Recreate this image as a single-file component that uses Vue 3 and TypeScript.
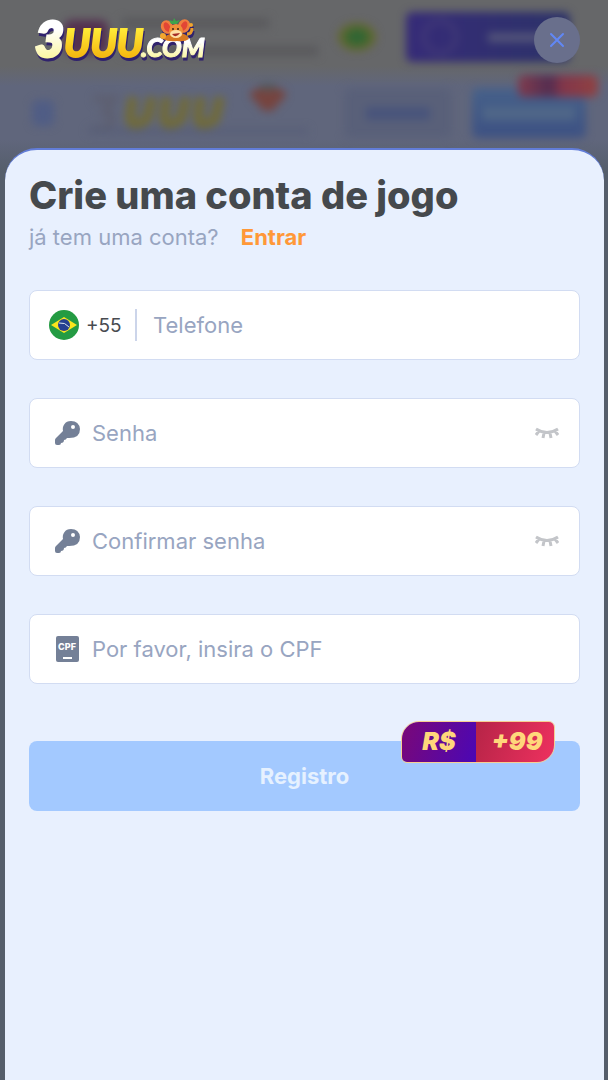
<script setup lang="ts">
import { ref } from 'vue'

interface SecretField {
  id: string
  label: string
}

const secretFields: SecretField[] = [
  { id: 'password', label: 'Senha' },
  { id: 'confirm', label: 'Confirmar senha' },
]

const phone = ref('')
const cpf = ref('')
const secrets = ref<Record<string, string>>({ password: '', confirm: '' })
const visible = ref<Record<string, boolean>>({ password: false, confirm: false })

function toggle(id: string) {
  visible.value[id] = !visible.value[id]
}
</script>

<template>
  <div class="page">
    <div class="backdrop" aria-hidden="true">
      <div class="promo">
        <i class="promo-mark"></i>
        <div class="promo-lines"><i></i><i></i></div>
        <i class="promo-flag"></i>
        <div class="promo-button"><i class="ring"></i><i class="dash"></i></div>
      </div>
      <div class="site-bar">
        <i class="menu"></i>
        <svg class="site-logo" width="220" height="56" viewBox="0 0 220 56">
          <path d="M6 14h20l-9 13q13 3 3 14-6 6-16 2" fill="none" stroke="#5d5f70" stroke-width="7" />
          <path d="M45 12l-3 20q1 14 17 2l5-22M79 12l-3 20q1 14 17 2l5-22M113 12l-3 20q1 14 17 2l5-22" fill="none" stroke="#716b38" stroke-width="10" />
          <path d="M0 46h220" stroke="#575e78" stroke-width="5" />
          <path d="M162 8q8-8 18-2 10-6 18 2-2 8-8 10-2 8-10 8t-10-8q-6-2-8-10z" fill="#76443f" />
          <path d="M172 3q8-3 16 0" stroke="#4b5248" stroke-width="4" />
        </svg>
        <div class="ghost login"><i></i></div>
        <div class="ghost join"><i></i><b></b></div>
      </div>
    </div>

    <header class="top">
      <svg class="logo" width="180" height="52" viewBox="0 0 180 52" role="img" aria-label="3UUU.COM">
        <defs>
          <linearGradient id="pale" x1="0" y1="0" x2="0" y2="1">
            <stop offset="0.35" stop-color="#ffffff" />
            <stop offset="0.85" stop-color="#fbf6a0" />
          </linearGradient>
          <linearGradient id="gold" x1="0" y1="0" x2="0" y2="1">
            <stop offset="0.25" stop-color="#ffe835" />
            <stop offset="0.8" stop-color="#f5b912" />
          </linearGradient>
        </defs>
        <g class="logo-text">
          <text x="4" y="43" font-size="50" fill="url(#pale)" stroke="url(#pale)" stroke-width="3">3</text>
          <text x="33" y="43" font-size="38" fill="url(#gold)" stroke="url(#gold)" stroke-width="2">UUU</text>
          <text x="110" y="43" font-size="26" fill="url(#pale)" stroke="url(#pale)" stroke-width="1">.COM</text>
        </g>
        <g>
          <path d="M132 25q4-6 13-5 10-2 13 5-4 3-12 2-9 1-14-2z" fill="#d87820" />
          <ellipse cx="136" cy="13" rx="6" ry="7" fill="#ef7f3f" transform="rotate(-25 136 13)" />
          <ellipse cx="136" cy="13" rx="3" ry="5" fill="#e24635" transform="rotate(-25 136 13)" />
          <ellipse cx="153" cy="12" rx="6" ry="7" fill="#ef7f3f" transform="rotate(25 153 12)" />
          <ellipse cx="153" cy="12" rx="3" ry="5" fill="#e24635" transform="rotate(25 153 12)" />
          <path d="M156 20q5 0 5-6" fill="none" stroke="#e99a2b" stroke-width="3" />
          <circle cx="160" cy="11" r="2" fill="#f3a62e" />
          <circle cx="132" cy="22" r="3" fill="#f3a62e" />
          <ellipse cx="145" cy="17" rx="7" ry="7" fill="#ee9139" />
          <ellipse cx="145" cy="20" rx="6" ry="4" fill="#ffe0a6" />
          <path d="M141 20q4 5 8-1z" fill="#a52d28" />
          <circle cx="142" cy="15" r="1" fill="#382217" />
          <circle cx="147" cy="15" r="1" fill="#382217" />
          <path d="M140 10l-2-4 4 1 1-3 2 3 4-1-3 4z" fill="#3da34c" />
        </g>
      </svg>
      <button class="close" type="button" aria-label="Fechar">
        <svg width="16" height="16" viewBox="0 0 16 16"><path d="M2 2l12 12M14 2L2 14" /></svg>
      </button>
    </header>

    <main class="sheet">
      <h1>Crie uma conta de jogo</h1>
      <p class="sub">já tem uma conta? <a href="#entrar">Entrar</a></p>

      <form @submit.prevent>
        <div class="field phone">
          <svg class="flag" width="30" height="30" viewBox="0 0 30 30" aria-hidden="true">
            <circle cx="15" cy="15" r="15" fill="#249b43" />
            <path d="M2 15L15 7l13 8-13 8z" fill="#fbe51d" />
            <circle cx="15" cy="15" r="6" fill="#253f91" />
            <path d="M10 13q6-1 10 4" fill="none" stroke="#dbe8ee" stroke-width="1" />
          </svg>
          <span class="code">+55</span>
          <span class="divider"></span>
          <input v-model="phone" type="tel" aria-label="Telefone" placeholder="Telefone" />
        </div>

        <div v-for="field in secretFields" :key="field.id" class="field">
          <svg class="icon" width="26" height="26" viewBox="0 0 26 26" aria-hidden="true">
            <path fill-rule="evenodd" d="M16 1C10 1 7 6 8 11L1 18Q0 19 0 20V23Q0 25 2 25H4Q6 25 6 23Q9 23 9 20Q11 20 12 18Q25 19 25 9Q24 1 16 1zM18 5a2 2 0 1 1 0 4 2 2 0 0 1 0-4z" fill="#748097" />
          </svg>
          <input
            v-model="secrets[field.id]"
            :type="visible[field.id] ? 'text' : 'password'"
            :aria-label="field.label"
            :placeholder="field.label"
          />
          <button class="eye" type="button" aria-label="Mostrar senha" @click="toggle(field.id)">
            <svg width="24" height="14" viewBox="0 0 24 14">
              <path d="M1 3q11 7 22 0M4 5L1 9M9 7L8 12M15 7l1 5M20 5l3 4" />
            </svg>
          </button>
        </div>

        <div class="field">
          <svg class="icon" width="26" height="28" viewBox="0 0 26 28" aria-hidden="true">
            <rect x="1" y="1" width="23" height="26" rx="2" fill="#748097" />
            <text x="12" y="15" text-anchor="middle" class="cpf">CPF</text>
            <path d="M8 23h9" stroke="#fff" stroke-width="2" />
          </svg>
          <input v-model="cpf" type="text" inputmode="numeric" aria-label="CPF" placeholder="Por favor, insira o CPF" />
        </div>

        <div class="action">
          <button class="submit" type="submit">Registro</button>
          <div class="bonus"><span>R$</span><span>+99</span></div>
        </div>
      </form>
    </main>
  </div>
</template>

<style>
body {
  margin: 0;
}
</style>

<style scoped>
* {
  box-sizing: border-box;
}

.page {
  position: relative;
  display: flex;
  flex-direction: column;
  min-height: 100vh;
  overflow: hidden;
  background: #555e6b;
  font-family: Inter, "Liberation Sans", sans-serif;
}

.backdrop {
  position: absolute;
  inset: 0 0 auto;
  padding-bottom: 20px;
  background: linear-gradient(#666769 66px, #60667c 86px 140px, #555e6b);
}

.promo,
.site-bar {
  display: flex;
  align-items: center;
  filter: blur(4px);
}

.promo {
  height: 74px;
  padding: 0 38px 0 64px;
}

.promo-mark {
  width: 44px;
  height: 34px;
  border-radius: 8px;
  background: #54304f;
}

.promo-lines {
  display: grid;
  flex: 1;
  gap: 18px;
  margin: 0 20px 0 14px;
}

.promo-lines i {
  width: 75%;
  height: 10px;
  background: #5a5a5d;
}

.promo-lines i + i {
  width: 100%;
}

.promo-flag {
  width: 38px;
  height: 28px;
  margin-right: 30px;
  border-radius: 50%;
  background: radial-gradient(ellipse, #2e6634 25%, #69682d 65%);
}

.promo-button {
  display: flex;
  align-items: center;
  gap: 30px;
  width: 164px;
  height: 50px;
  padding-left: 16px;
  border-radius: 6px;
  background: linear-gradient(90deg, #362b78, #2c3269);
}

.ring {
  width: 36px;
  height: 36px;
  border: 4px solid #433b78;
  border-radius: 50%;
}

.dash {
  width: 60px;
  height: 9px;
  background: #54557a;
}

.site-bar {
  height: 78px;
  padding: 0 22px 0 32px;
}

.menu {
  width: 22px;
  height: 26px;
  border-radius: 6px;
  background: #505d85;
}

.site-logo {
  margin-left: 34px;
}

.ghost {
  position: relative;
  display: grid;
  place-items: center;
  width: 108px;
  height: 50px;
  border-radius: 6px;
  background: #596079;
}

.login {
  margin-left: auto;
}

.ghost i {
  width: 60%;
  height: 13px;
  background: #48547b;
}

.join {
  width: 114px;
  margin-left: 20px;
  background: linear-gradient(#46618a, #3d5183);
}

.join i {
  width: 80%;
  background: #506788;
}

.ghost b {
  position: absolute;
  top: -13px;
  right: -12px;
  width: 80px;
  height: 22px;
  border-radius: 6px;
  background: linear-gradient(90deg, #813c4d, #532d51 40%, #82364a 55%, #904242);
}

.top {
  position: relative;
  display: flex;
  align-items: center;
  justify-content: space-between;
  height: 148px;
  padding: 14px 28px 82px 31px;
}

.logo {
  overflow: visible;
  filter: drop-shadow(1px 3px 0 #30226d);
}

.logo-text {
  font-family: Lato, sans-serif;
  font-style: italic;
  font-weight: 900;
}

.close {
  display: grid;
  place-items: center;
  width: 46px;
  height: 46px;
  padding: 0;
  border: 0;
  border-radius: 50%;
  background: #696f8c;
}

.close path {
  fill: none;
  stroke: #6187f5;
  stroke-width: 2;
  stroke-linecap: round;
}

.sheet {
  position: relative;
  flex: 1;
  margin: 0 4px 0 5px;
  padding: 24px 24px 40px;
  border-top: 2px solid #627dd8;
  border-radius: 32px 32px 0 0;
  background: #e8f0fe;
}

h1 {
  margin: 0;
  color: #45494d;
  font-size: 38px;
  font-weight: 800;
  line-height: 42px;
}

.sub {
  margin: 6px 0 0;
  color: #98a5c1;
  font-size: 22px;
  line-height: 30px;
}

.sub a {
  margin-left: 16px;
  color: #ff9838;
  font-weight: 700;
  text-decoration: none;
}

form {
  display: grid;
  gap: 38px;
  margin-top: 38px;
}

.field {
  display: flex;
  align-items: center;
  height: 70px;
  padding: 0 20px 0 25px;
  border: 1px solid #d2dcf2;
  border-radius: 8px;
  background: #fff;
}

.phone {
  padding-left: 19px;
}

.code {
  width: 34px;
  margin-left: 7px;
  color: #484b50;
  font-size: 19px;
}

.divider {
  width: 2px;
  height: 32px;
  margin: 0 16px 0 15px;
  background: #ccd5ea;
}

.icon {
  flex: none;
  margin-right: 11px;
}

.cpf {
  fill: #fff;
  font-size: 9px;
  font-weight: 800;
}

input {
  flex: 1;
  width: 100%;
  min-width: 0;
  height: 40px;
  padding: 0;
  border: 0;
  outline: 0;
  background: transparent;
  color: #45494d;
  font: inherit;
  font-size: 22px;
}

input::placeholder {
  color: #98a5c1;
  opacity: 1;
}

.eye {
  display: grid;
  padding: 0;
  border: 0;
  background: transparent;
}

.eye path {
  fill: none;
  stroke: #c3c5c9;
  stroke-width: 3;
}

.action {
  position: relative;
  margin-top: 19px;
}

.submit {
  width: 100%;
  height: 70px;
  border: 0;
  border-radius: 8px;
  background: #a3c9ff;
  color: #e6f1ff;
  font: inherit;
  font-size: 22px;
  font-weight: 700;
}

.bonus {
  position: absolute;
  top: -20px;
  right: 25px;
  display: grid;
  grid-template-columns: 74px 1fr;
  width: 154px;
  height: 42px;
  overflow: hidden;
  border: 1px solid #f6cf93;
  border-radius: 18px 6px 18px 6px;
  color: #ffd77b;
  font-size: 25px;
  font-style: italic;
  font-weight: 900;
  line-height: 38px;
  text-align: center;
}

.bonus span:first-child {
  background: linear-gradient(110deg, #7a0877, #4b07b5);
}

.bonus span:last-child {
  padding-left: 4px;
  background: linear-gradient(110deg, #b62447, #ee315f);
}
</style>
